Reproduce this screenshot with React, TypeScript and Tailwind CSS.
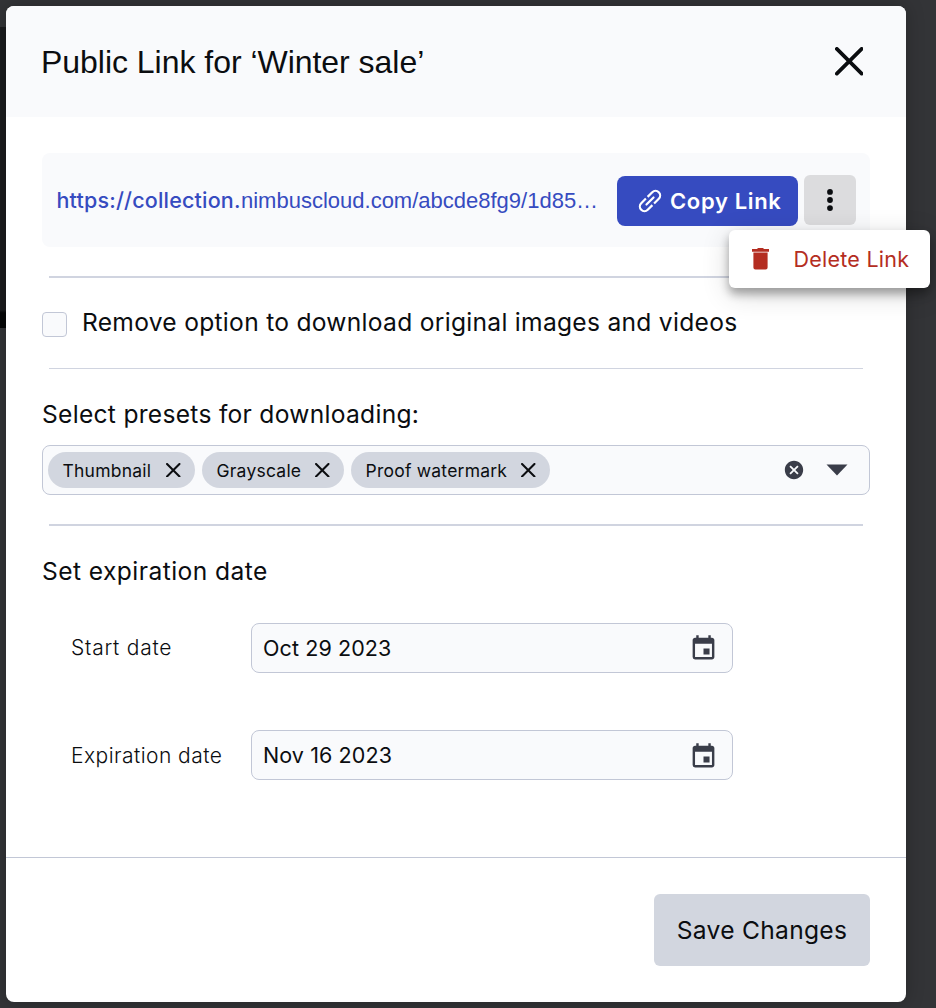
import React from "react";
import { MdCancel, MdEvent } from "react-icons/md";

function Cross({ size, stroke, className = "" }: { size: number; stroke: number; className?: string }) {
  return (
    <svg width={size} height={size} viewBox={`0 0 ${size} ${size}`} className={`shrink-0 ${className}`}>
      <path
        d={`M${stroke / 2} ${stroke / 2}L${size - stroke / 2} ${size - stroke / 2}M${size - stroke / 2} ${stroke / 2}L${stroke / 2} ${size - stroke / 2}`}
        stroke="#0b0d10"
        strokeWidth={stroke}
        strokeLinecap="round"
      />
    </svg>
  );
}

function LinkIcon() {
  return (
    <svg width="22" height="22" viewBox="0 0 22 22" fill="none" stroke="#fff" strokeWidth="2.2" className="shrink-0 overflow-visible">
      <g transform="rotate(-45 11 11)">
        <path d="M9.8 6.4H3.2a4.6 4.6 0 0 0 0 9.2H9.8" />
        <path d="M12.2 6.4h6.6a4.6 4.6 0 0 1 0 9.2H12.2" />
        <path d="M6 11h10" strokeLinecap="round" />
      </g>
    </svg>
  );
}

function TrashIcon() {
  return (
    <svg width="17" height="22" viewBox="0 0 17 22" fill="#b42d21" className="shrink-0">
      <path d="M5 1l1-1h5l1 1h5v2.8H0V1z" />
      <path d="M1.4 4.6h14.2v15a2 2 0 0 1-2 2H3.4a2 2 0 0 1-2-2z" />
    </svg>
  );
}

function Chip({ label, width }: { label: string; width: string }) {
  return (
    <div className={`flex h-9 items-center justify-between rounded-full bg-[#d2d6df] pl-[14.5px] pr-[14.5px] ${width}`}>
      <span className="mt-0.5 text-[17.5px] leading-9 tracking-[0.23px]">{label}</span>
      <Cross size={14.5} stroke={2.1} />
    </div>
  );
}

function DateRow({ label, value, labelClass, iconClass }: { label: string; value: string; labelClass: string; iconClass: string }) {
  return (
    <div className="flex h-[50px] items-center pl-[29px]">
      <span className={`w-[180px] text-[21px] font-light ${labelClass}`}>{label}</span>
      <div className="flex h-[50px] w-[482px] items-center justify-between rounded-lg border border-[#c2c7d6] bg-[#f9fafc] pl-[11px] pr-[14px]">
        <span className="pt-px text-[21.5px] tracking-[0.1px]">{value}</span>
        <MdEvent size={29} color="#3a3d49" className={iconClass} />
      </div>
    </div>
  );
}

export default function App() {
  return (
    <div className="relative h-[1008px] w-[936px] overflow-hidden whitespace-nowrap bg-[#333437] p-1.5 font-['Inter',sans-serif] font-[370] text-[#0b0d10]">
      <div className="absolute left-0 top-[27px] h-[301px] w-1.5 bg-linear-to-b from-[#1b1c1e] from-94% to-[#050607] to-95%" />
      <div className="relative flex h-[996px] w-[900px] flex-col overflow-hidden rounded-[8px] bg-white shadow-[0_0_18px_rgba(0,0,0,0.25)]">
        <header className="flex h-[111px] items-center justify-between bg-[#f9fafc] pl-[35px] pr-[43px]">
          <h1 className="font-['Liberation_Sans',Arial,sans-serif] text-[32px] leading-10 tracking-[-0.03px]">Public Link for ‘Winter sale’</h1>
          <Cross size={28.5} stroke={3.7} />
        </header>

        <main className="flex h-[740px] flex-col px-9 pt-9">
          <div className="flex h-[94px] items-center rounded-lg bg-[#f9fafc] pl-[14.5px] pr-[14px]">
            <div className="flex w-[560.5px] items-baseline text-[#364bc0]">
              <span className="w-[184.5px] text-[21.5px] font-[460] tracking-[0.18px]">https://collection.</span>
              <span className="font-['Liberation_Sans',Arial,sans-serif] text-[22px]">nimbuscloud.com/abcde8fg9/1d85…</span>
            </div>
            <button className="mt-0.5 flex h-[50px] w-[181px] items-center gap-[9px] rounded-lg bg-[#364bc0] pl-[22px] text-[22px] font-semibold tracking-[0.65px] text-white">
              <LinkIcon />
              Copy Link
            </button>
            <button className="ml-1.5 flex h-[50px] w-[52px] items-center justify-center rounded-md bg-[#dcdcde]">
              <svg width="6" height="22" viewBox="0 0 6 22" fill="#0b0d10">
                <circle cx="3" cy="2.9" r="2.9" />
                <circle cx="3" cy="11" r="2.9" />
                <circle cx="3" cy="19.1" r="2.9" />
              </svg>
            </button>
          </div>

          <div className="mx-[7px] mt-[29px] h-0.5 bg-[#d0d4e0]" />

          <label className="mt-[34px] flex h-[25px] items-center gap-[15px]">
            <span className="size-[25px] rounded-[4px] border border-[#c2c7d6] bg-[#f9fafc]" />
            <span className="-mt-1 text-[24.6px] leading-[25px] tracking-[0.28px]">Remove option to download original images and videos</span>
          </label>

          <div className="mx-[7px] mt-[31px] h-px bg-[#d0d4e0]" />

          <h2 className="mt-[30px] text-[24.6px] leading-[30px] tracking-[0.28px]">Select presets for downloading:</h2>
          <div className="mt-4 flex h-[50px] items-center gap-[7px] rounded-lg border border-[#c2c7d6] bg-[#f9fafc] pl-[5px]">
            <Chip label="Thumbnail" width="w-[147px]" />
            <Chip label="Grayscale" width="w-[142px]" />
            <Chip label="Proof watermark" width="w-[199px]" />
            <div className="ml-auto flex items-center gap-[21px] pr-[21px]">
              <MdCancel size={22} color="#3a3d49" />
              <svg width="22" height="12" viewBox="0 0 22 12" fill="#3a3d49">
                <path d="M0.5 0.5h21L11 11.5z" />
              </svg>
            </div>
          </div>

          <div className="mx-[7px] mt-[29px] h-0.5 bg-[#d0d4e0]" />

          <h2 className="mt-[30px] text-[24.6px] leading-[30px] tracking-[0.43px]">Set expiration date</h2>
          <div className="mt-[37px] flex flex-col gap-[57px]">
            <DateRow label="Start date" value="Oct 29 2023" labelClass="tracking-[0.75px]" iconClass="" />
            <DateRow label="Expiration date" value="Nov 16 2023" labelClass="pt-0.5 tracking-[0.45px]" iconClass="mt-0.5" />
          </div>
        </main>

        <footer className="flex h-[145px] justify-end border-t border-[#c2c7d6] pr-9 pt-9">
          <button className="h-[72px] w-[216px] rounded-md bg-[#d2d6df] text-[24.6px] tracking-[0.28px]">Save Changes</button>
        </footer>
      </div>

      <div className="absolute left-[729px] top-[230px] flex h-[58px] w-[201px] items-center rounded-md bg-white pl-[23px] text-[21.5px] font-normal text-[#b42d21] shadow-[0_6px_10px_rgba(0,0,0,0.32),0_6px_28px_rgba(0,0,0,0.16)]">
        <TrashIcon />
        <span className="ml-[24.5px] pt-px tracking-[0.25px]">Delete Link</span>
      </div>
    </div>
  );
}
